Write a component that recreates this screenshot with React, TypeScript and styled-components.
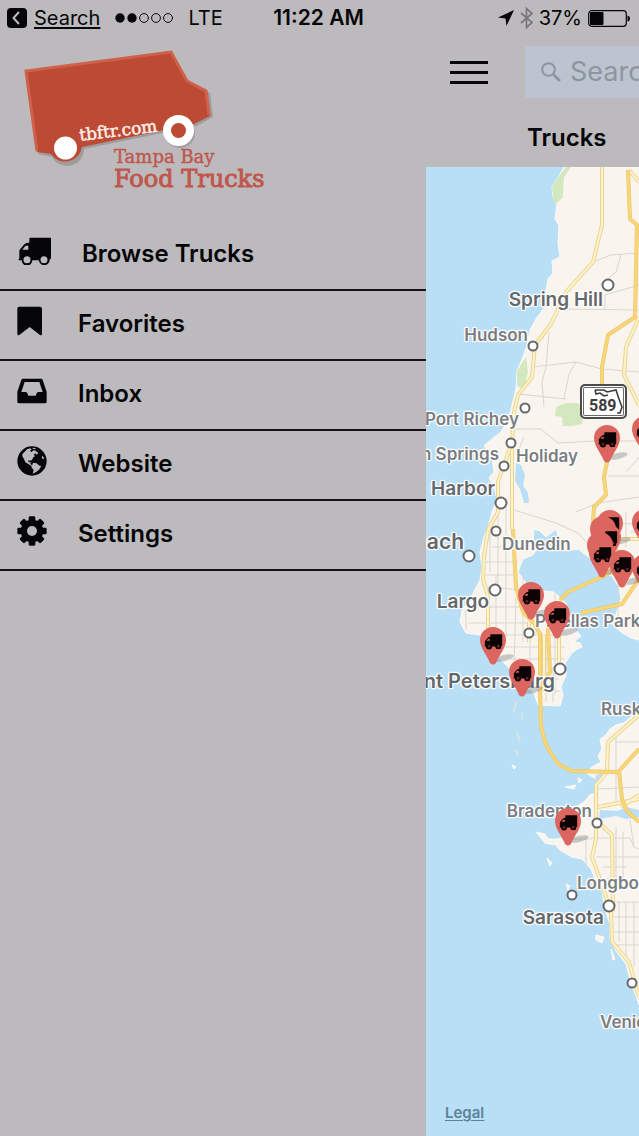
import React from 'react';
import styled, { createGlobalStyle } from 'styled-components';

const ink = '#060608';
const chrome = '#bcbabd';

const GlobalStyle = createGlobalStyle`
  * { box-sizing: border-box; }
  body {
    margin: 0;
    background: ${chrome};
    color: ${ink};
    font-family: Inter, "Liberation Sans", sans-serif;
  }
`;

/* ---------- Shell ---------- */

const Screen = styled.div`
  display: flex;
  flex-direction: column;
  min-height: 100vh;
  overflow: hidden;
`;

const Body = styled.div`
  flex: 1;
  display: grid;
  grid-template-columns: 2fr 1fr;
`;

/* ---------- Status bar ---------- */

const StatusBar = styled.header`
  display: grid;
  grid-template-columns: 1fr auto 1fr;
  align-items: center;
  height: 36px;
  padding: 0 9px 0 7px;
  font-size: 20px;
  line-height: 24px;
`;

const StatusGroup = styled.div<{ $end?: boolean; $gap: number }>`
  display: flex;
  align-items: center;
  justify-content: ${p => (p.$end ? 'flex-end' : 'flex-start')};
  gap: ${p => p.$gap}px;
`;

const BackLink = styled.a`
  display: flex;
  align-items: center;
  gap: 7px;
  color: inherit;
  text-underline-offset: 2px;
`;

const Clock = styled.time`
  font-size: 21px;
  font-weight: 600;
`;

/* ---------- Drawer ---------- */

const Drawer = styled.aside`
  min-width: 0;
`;

const LogoBox = styled.div`
  height: 185px;
  padding: 10px 0 0 18px;
`;

const MenuList = styled.ul`
  list-style: none;
  margin: 0;
  padding: 0;
`;

const MenuItem = styled.li`
  border-bottom: 2px solid #141316;
`;

const MenuLink = styled.a`
  display: flex;
  align-items: center;
  gap: 31px;
  height: 68px;
  padding: 0 17px 8px;
  color: inherit;
  text-decoration: none;
  svg { flex: none; }
`;

const MenuLabel = styled.span`
  padding-top: 5px;
  font-size: 24px;
  line-height: 28px;
  font-weight: 600;
`;

/* ---------- Main pane ---------- */

const Pane = styled.main`
  display: flex;
  flex-direction: column;
  min-width: 0;
  overflow: hidden;
`;

const Toolbar = styled.div`
  display: flex;
  align-items: center;
  gap: 37px;
  height: 68px;
  padding: 4px 0 0 24px;
`;

const MenuButton = styled.button`
  flex: none;
  display: flex;
  flex-direction: column;
  gap: 7px;
  width: 38px;
  padding: 0;
  border: 0;
  background: none;
`;

const Bar = styled.span`
  height: 3px;
  background: ${ink};
`;

const SearchBox = styled.label`
  flex: none;
  display: flex;
  align-items: center;
  gap: 9px;
  width: 480px;
  height: 52px;
  padding: 0 16px;
  border-radius: 3px;
  background: #bcc4d0;
`;

const SearchInput = styled.input`
  flex: 1;
  min-width: 0;
  padding: 0;
  border: 0;
  outline: 0;
  background: none;
  color: ${ink};
  font: 400 27px/32px Inter, "Liberation Sans", sans-serif;
  &::placeholder { color: #8d959f; opacity: 1; }
`;

const PaneTitle = styled.h1`
  margin: 0;
  padding: 20px 0 0 101px;
  height: 63px;
  font-size: 24px;
  line-height: 28px;
  font-weight: 600;
`;

/* ---------- Map ---------- */

const MapCanvas = styled.section`
  position: relative;
  flex: 1;
  min-height: 960px;
  overflow: hidden;
  background: #b9dff6;
`;

const Terrain = styled.svg`
  display: block;
`;

const CityLabel = styled.span<{ $x: number; $y: number; $size: number; $end?: boolean; $major?: boolean }>`
  position: absolute;
  left: ${p => p.$x}px;
  top: ${p => p.$y}px;
  transform: translate(${p => (p.$end ? '-100%' : '0')}, -50%);
  white-space: nowrap;
  font-size: ${p => p.$size}px;
  line-height: 24px;
  font-weight: 600;
  color: ${p => (p.$major ? '#65686b' : '#7b7e81')};
  text-shadow: 0 0 2px #fff, 0 0 2px #fff, 1px 1px 1px #fff, -1px -1px 1px #fff, 1px -1px 1px #fff, -1px 1px 1px #fff;
`;

const PinMark = styled.button<{ $x: number; $y: number }>`
  position: absolute;
  left: ${p => p.$x - 14}px;
  top: ${p => p.$y - 14}px;
  padding: 0;
  border: 0;
  background: none;
  svg { display: block; overflow: visible; }
`;

const Shield = styled.div`
  position: absolute;
  left: 154px;
  top: 217px;
  width: 47px;
  height: 35px;
  border: 2px solid #4b4b4b;
  border-radius: 5px;
  background: #fff;
  box-shadow: inset 0 0 0 1px #fff, inset 0 0 0 2px #6a6a6a;
  svg { position: absolute; left: 0; top: 0; }
`;

const ShieldNumber = styled.span`
  position: absolute;
  left: 7px;
  bottom: 2px;
  font: 700 16px/18px Roboto, "Liberation Sans", sans-serif;
  color: #3c3c3c;
`;

const LegalLink = styled.a`
  position: absolute;
  left: 19px;
  bottom: 13px;
  font-size: 15px;
  line-height: 20px;
  font-weight: 600;
  color: #5d8398;
  text-underline-offset: 2px;
`;

/* ---------- Icons ---------- */

const truckPath =
  'M38 2 H98 Q101 2 101 5 V66 H96 A16 16 0 1 1 64 70 H44 A16 16 0 1 1 12 70 H3 V65 H5 V42 Q5 39 8 36 L20 22 Q24 17 30 17 H35 V5 Q35 2 38 2 Z M14 38 H32 V26 H25 Q23 26 21 29 Z';

const TruckIcon = () => (
  <svg width="34" height="28" viewBox="-2 0 102 84">
    <path fillRule="evenodd" fill={ink} d={truckPath} />
    <circle cx="28" cy="68" r="13" fill={chrome} stroke={ink} strokeWidth="5" />
    <circle cx="79" cy="68" r="13" fill={chrome} stroke={ink} strokeWidth="5" />
  </svg>
);

const BookmarkIcon = () => (
  <svg width="30" height="30" viewBox="0 0 90 90">
    <path fill={ink} d="M6 2 H69 Q75 2 75 8 V83 Q75 90 69 87 L38 63 L7 87 Q1 90 1 83 V8 Q1 2 6 2 Z" />
  </svg>
);

const InboxIcon = () => (
  <svg width="30" height="30" viewBox="0 0 90 90">
    <path
      fillRule="evenodd"
      fill={ink}
      d="M18 8 H72 Q76 8 77 12 L88 44 Q89 47 89 50 V78 Q89 82 85 82 H5 Q1 82 1 78 V50 Q1 47 2 44 L13 12 Q14 8 18 8 Z M23 18 L13 48 H25 Q29 48 31 52 L34 59 H56 L59 52 Q61 48 65 48 H77 L67 18 Z"
    />
  </svg>
);

const GlobeIcon = () => (
  <svg width="30" height="30" viewBox="0 0 90 90">
    <circle cx="45" cy="45" r="44" fill={ink} />
    <path
      fill={chrome}
      d="M30 10 L40 7 L44 11 L38 14 L44 18 L49 13 L56 14 L64 22 L58 26 L55 22 L50 26 L54 30 L48 35 L45 42 L38 44 L33 43 L35 49 L41 48 L40 54 L47 59 L43 60 L34 54 L25 49 L21 39 L16 31 L16 25 Z"
    />
    <path fill={chrome} d="M48 51 L57 51 L68 59 L73 60 L66 71 L56 79 L47 83 L50 72 L43 64 Z" />
    <path fill={chrome} d="M47 5 L57 7 L54 10 L47 8 Z M77 29 L82 38 L77 39 L74 34 Z" />
  </svg>
);

const GearIcon = () => (
  <svg width="30" height="30" viewBox="-45 -45 90 90">
    {[0, 45, 90, 135].map(a => (
      <rect key={a} x="-10" y="-44" width="20" height="88" rx="4" fill={ink} transform={`rotate(${a})`} />
    ))}
    <circle r="34" fill={ink} />
    <circle r="15" fill={chrome} />
  </svg>
);

const BackIcon = () => (
  <svg width="20" height="20" viewBox="0 0 20 20" aria-hidden="true">
    <rect width="20" height="20" rx="4" fill={ink} />
    <path d="M12 4 L6.500 10 L12 16" fill="none" stroke={chrome} strokeWidth="2" />
  </svg>
);

const SignalIcon = () => (
  <svg width="58" height="12" viewBox="0 0 58 12" role="img" aria-label="Signal 2 of 5">
    {[0, 1, 2, 3, 4].map(i => (
      <circle key={i} cx={5 + i * 12} cy="6" r={i < 2 ? 4.7 : 4.4} fill={i < 2 ? ink : 'none'} stroke={ink} strokeWidth={i < 2 ? 0 : 1} />
    ))}
  </svg>
);

const LocationIcon = () => (
  <svg width="16" height="16" viewBox="0 0 16 16" aria-hidden="true">
    <path d="M16 0 L8.500 16 L7.500 8.500 L0 7.500 Z" fill={ink} />
  </svg>
);

const BluetoothIcon = () => (
  <svg width="13" height="22" viewBox="0 0 13 22" aria-hidden="true">
    <path d="M1 6 L12 15.500 L6.500 20.500 V1.500 L12 6.500 L1 16" fill="none" stroke="#78777b" strokeWidth="1.700" />
  </svg>
);

const BatteryIcon = () => (
  <svg width="42" height="17" viewBox="0 0 42 17" role="img" aria-label="Battery">
    <rect x="0.700" y="0.700" width="37.600" height="15.600" rx="3" fill="none" stroke={ink} strokeWidth="1.200" />
    <rect x="2" y="2" width="13.500" height="13" rx="1" fill={ink} />
    <path d="M39.500 5.500 Q42 6 42 8.500 Q42 11 39.500 11.500 Z" fill={ink} />
  </svg>
);

const MagnifierIcon = () => (
  <svg width="20" height="20" viewBox="0 0 20 20" aria-hidden="true">
    <circle cx="7.500" cy="7.500" r="6.300" fill="none" stroke="#8d959f" strokeWidth="2" />
    <path d="M12 12 L19 19" stroke="#8d959f" strokeWidth="2.600" />
  </svg>
);

const slab = '"DejaVu Serif", serif';

const Logo = () => (
  <svg width="256" height="150" viewBox="18 46 256 150" role="img" aria-label="Tampa Bay Food Trucks">
    <path d="M27 73 L173 53 L189 83 L210 93 L213 117 L197 126 L84 149 A17 17 0 0 1 52 157 L38 154 Z" fill="#8d8889" opacity="0.6" />
    <path d="M25 71 L171 51 L187 81 L207 91 L210 116 L194 124 L82 147 A17 17 0 0 1 51 154 L37 152 Z" fill="#bd4a35" />
    <path d="M37 151 L26 71 L171 52 L187 81 L206 91 L209 115" fill="none" stroke="#cf6049" strokeWidth="3" />
    <circle cx="180" cy="133" r="15" fill="#8d8889" opacity="0.6" />
    <circle cx="65.500" cy="148" r="11.500" fill="#fff" />
    <circle cx="178.500" cy="130.500" r="15.500" fill="#fff" />
    <circle cx="178.500" cy="130.500" r="7.500" fill="#bd4a35" />
    <text x="80" y="141" transform="rotate(-7 80 141)" fontFamily={slab} fontSize="17" fill="#fbeee6" stroke="#fbeee6" strokeWidth="0.500">tbftr.com</text>
    <text x="114" y="163" fontFamily={slab} fontSize="18" fill="#c0564c" stroke="#c0564c" strokeWidth="0.400">Tampa Bay</text>
    <text x="114" y="187" fontFamily={slab} fontSize="24" fill="#c0564c" stroke="#c0564c" strokeWidth="0.900">Food Trucks</text>
  </svg>
);

/* ---------- Map data ---------- */

const northLand =
  'M138 0 L133 9 L126 20 L127 30 L131 37 L129 52 L133 58 L132 76 L134 90 L126 94 L127 106 L122 112 L120 125 L118 141 L110 152 L104 163 L101 178 L97 190 L91 204 L90 222 L86 238 L82 254 L74 266 L62 275 L58 279 L66 290 L68 305 L63 311 L68 320 L71 332 L66 345 L63 357 L58 370 L54 385 L56 400 L54 413 L45 430 L36 443 L34 455 L40 466 L54 468 L62 480 L76 494 L88 506 L98 516 L108 526 L112 538 L134 539 L137 528 L135 520 L140 508 L139 496 L146 486 L154 480 L149 474 L155 469 L147 460 L143 444 L140 436 L128 425 L114 424 L100 416 L92 405 L97 392 L107 388 L110 383 L107 374 L108 362 L114 364 L120 370 L130 362 L133 372 L128 380 L140 384 L152 382 L165 392 L172 404 L186 409 L193 420 L195 432 L190 447 L186 457 L195 465 L205 471 L213 473 H600 V0 Z';
const southLand =
  'M600 542 H213 L206 549 L198 556 L190 558 L184 562 L179 569 L174 572 L176 582 L172 589 L175 595 L166 600 L160 606 L170 612 L172 625 L164 628 L158 635 L148 641 L153 650 L140 655 L143 664 L136 671 L126 674 L134 683 L146 690 L156 692 L165 702 L170 714 L176 724 L179 742 L184 758 L184 772 L190 784 L200 797 L204 812 L213 838 H600 Z';
const islets =
  'M110 665 L119 667 L122 672 L134 672 L128 678 L119 676 Z M121 691 L126 696 L124 699 Z M139 620 L150 618 L148 622 Z M86 598 L90 600 L88 602 Z M140 717 L144 719 L142 723 Z M170 768 L178 770 L176 776 L170 773 Z M185 782 L189 792 L187 793 Z M152 611 L156 613 L153 616 Z M145 474 L154 476 L156 480 L149 483 Z';
const lakes =
  'M90 296 L95 298 L99 308 L97 318 L102 326 L103 336 L98 336 L94 322 L89 314 Z M174 643 L192 644 L200 640 L213 643 V650 L200 652 L190 649 L173 652 Z M170 608 L178 606 L175 613 L169 616 Z';
const parks =
  'M133 9 L140 0 H145 L138 10 L137 30 L129 38 L127 30 L126 20 Z M100 190 L102 205 L98 222 L91 219 L91 204 Z M130 240 L140 236 L152 236 L158 244 L156 257 L146 259 H137 L136 250 L129 249 Z';

const greyRoads = [
  'M167 95 L185 88 L213 86', 'M195 88 L190 105 L176 117', 'M135 142 L213 143', 'M179 128 V142', 'M179 128 L213 118',
  'M106 200 L150 195 L176 202 L213 205', 'M150 195 L143 207 L138 232', 'M123 165 L120 200 L116 215 L118 240', 'M92 227 L140 232',
  'M86 262 L115 262 L132 276 L170 274 L213 274', 'M182 309 L213 309', 'M213 290 L200 305', 'M88 343 L130 356 L152 366 L165 380', 'M150 345 L172 336 L213 330',
  'M60 395 H90', 'M58 408 H92', 'M66 380 H90', 'M64 363 V405', 'M72 345 V420', 'M80 340 V470', 'M98 270 L92 285', 'M70 408 V485', 'M62 420 L108 424', 'M50 440 H110', 'M42 456 H115', 'M55 468 H136', 'M75 480 H139', 'M84 492 H138', 'M97 404 V475', 'M104 455 V512', 'M90 430 L88 500', 'M129 425 V528', 'M120 470 V535', 'M127 500 V536', 'M40 443 V463', 'M100 512 H132', 'M112 524 H134',
  'M200 345 V380', 'M205 365 H213', 'M167 356 L213 357', 'M164 370 L213 372', 'M180 345 L180 375', 'M192 410 V450',
  'M190 570 V638', 'M213 620 L172 622', 'M189 575 H213', 'M165 671 H204 L208 680', 'M204 653 L208 680 L213 682', 'M160 670 V700', 'M190 660 V712', 'M197 665 V712', 'M170 690 H213', 'M178 712 H198', 'M177 700 H200', 'M186 735 H213', 'M188 750 H213', 'M188 765 H213', 'M190 778 H213', 'M200 735 V790', 'M208 735 V800', 'M193 735 V775', 'M136 672 H165',
];

const paleRoads = [
  'M176 0 V58 L167 95 L140 125 L125 157 L109 178 L106 210 L92 228 L88 245 L86 275 V362',
  'M86 275 L78 298 L72 315 L72 345 L62 363 L58 390 L57 412 L62 430 V472',
  'M213 150 L200 180 L198 208 L213 238', 'M203 3 L213 15', 'M133 462 V495', 'M118 467 V520', 'M103 455 V475',
  'M213 548 L182 575 L181 605 L170 618 V672 L166 690 L176 718 L185 745 L186 775 L203 795 L213 830',
  'M172 640 L213 632', 'M172 655 L186 668 L187 745', 'M164 372 H213', 'M195 640 L213 628',
];

const goldRoads = [
  'M202 3 L204 52 L211 58 L209 150 L182 168 L176 200 V240', 'M182 290 L178 310 L180 328 L168 340 L167 356',
  'M87 362 L90 420 L97 445', 'M97 445 L108 456 L114 467 V520 L115 560 L120 578 L132 597 L146 604 L192 605',
  'M134 433 L142 425 L180 408 L200 392', 'M155 446 L196 437 L213 412', 'M121 440 L124 505 L115 522',
  'M213 582 L193 604 L196 632 L201 644 L213 655', 'M167 356 L175 375 L196 387',
];

const towns: [number, number, number][] = [
  [182, 118, 5.5], [107, 179, 4.5], [99, 241, 4.5], [85, 276, 4.5], [78, 299, 4.5], [75, 336, 5.5], [70, 364, 4.5], [43, 389, 5.5],
  [69, 423, 5.5], [103, 466, 4.5], [134, 502, 5.5], [171, 656, 4.5], [146, 728, 4.5], [183, 739, 5.5], [206, 816, 4.5],
];

type City = { name: string; x: number; y: number; size: number; end?: boolean; major?: boolean };
const cities: City[] = [
  { name: 'Spring Hill', x: 177, y: 133, size: 19, end: true, major: true },
  { name: 'Hudson', x: 102, y: 168, size: 17, end: true },
  { name: 'Port Richey', x: 93, y: 252, size: 17, end: true },
  { name: 'Tarpon Springs', x: 73, y: 287, size: 17, end: true },
  { name: 'Holiday', x: 90, y: 289, size: 17 },
  { name: 'Harbor', x: 69, y: 322, size: 19, end: true, major: true },
  { name: 'Beach', x: 38, y: 375, size: 21, end: true, major: true },
  { name: 'Dunedin', x: 76, y: 377, size: 17 },
  { name: 'Largo', x: 63, y: 435, size: 19, end: true, major: true },
  { name: 'Pinellas Park', x: 109, y: 454, size: 17 },
  { name: 'Saint Petersburg', x: 129, y: 514, size: 20, end: true, major: true },
  { name: 'Ruskin', x: 175, y: 542, size: 17 },
  { name: 'Bradenton', x: 166, y: 644, size: 17, end: true },
  { name: 'Longboat Key', x: 151, y: 716, size: 17 },
  { name: 'Sarasota', x: 178, y: 751, size: 19, end: true, major: true },
  { name: 'Venice', x: 174, y: 855, size: 17 },
];

type PinSpot = { x: number; y: number; bare?: boolean };
const pins: PinSpot[] = [
  { x: 181, y: 271 },
  { x: 219, y: 262 },
  { x: 219, y: 355 },
  { x: 219, y: 400 },
  { x: 184, y: 356 },
  { x: 177, y: 362, bare: true },
  { x: 182, y: 370 },
  { x: 174, y: 378, bare: true },
  { x: 176, y: 386 },
  { x: 196, y: 396 },
  { x: 105, y: 428 },
  { x: 131, y: 447 },
  { x: 67, y: 473 },
  { x: 96, y: 505 },
  { x: 142, y: 654 },
];

const Pin = ({ x, y, bare }: PinSpot) => (
  <PinMark $x={x} $y={y} type="button" aria-label="Food truck">
    <svg width="28" height="40" viewBox="0 0 28 40">
      {!bare && <ellipse cx="25" cy="32" rx="10" ry="3" fill="#6b7378" opacity="0.35" transform="rotate(-14 25 32)" />}
      <path d="M14 1 A13 13 0 0 1 27 14 C27 22 20 29 17 37 Q14 40 11 37 C8 29 1 22 1 14 A13 13 0 0 1 14 1 Z" fill="#dd6560" />
      {!bare && (
        <g transform="translate(5 8) scale(0.18)">
          <path d={truckPath} fill="#0b0304" fillRule="evenodd" />
          <circle cx="28" cy="68" r="12" fill="#5a2325" stroke="#0b0304" strokeWidth="8" />
          <circle cx="79" cy="68" r="12" fill="#5a2325" stroke="#0b0304" strokeWidth="8" />
        </g>
      )}
    </svg>
  </PinMark>
);

const Roads = ({ paths, color, width }: { paths: string[]; color: string; width: number }) => (
  <g fill="none" stroke={color} strokeWidth={width} strokeLinejoin="round">
    {paths.map(d => <path key={d} d={d} />)}
  </g>
);

const TruckMap = () => (
  <MapCanvas aria-label="Map of food trucks">
    <Terrain width="600" height="960" viewBox="0 0 600 960" aria-hidden="true">
      <g fill="#f9f5ee" stroke="#fdfbf6" strokeWidth="1">
        <path d={northLand} />
        <path d={southLand} />
        <path d={islets} />
      </g>
      <path d={parks} fill="#d3e8bf" />
      <path d={lakes} fill="#b9dff6" />
      <Roads paths={greyRoads} color="#d9d5cf" width={1} />
      <Roads paths={paleRoads} color="#ecd48c" width={4} />
      <Roads paths={paleRoads} color="#fdf4cf" width={2} />
      <Roads paths={goldRoads} color="#e8c468" width={4} />
      <Roads paths={goldRoads} color="#f8d678" width={3} />
      <path d="M90 535 L88 545 M96 545 V552 M91 565 L94 575 M89 583 L92 588" stroke="#d9e4e0" strokeWidth="2" />
      <g fill="#fff" stroke="#66686a" strokeWidth="2">
        {towns.map(([cx, cy, r]) => <circle key={`${cx}-${cy}`} cx={cx} cy={cy} r={r} />)}
      </g>
    </Terrain>
    {cities.map(c => (
      <CityLabel key={c.name} $x={c.x} $y={c.y} $size={c.size} $end={c.end} $major={c.major}>{c.name}</CityLabel>
    ))}
    <Shield>
      <svg width="43" height="31" viewBox="0 0 43 31" aria-hidden="true">
        <path d="M13 4 H22 L25 6 L34 4 L37 13 L40 21 L38 27 L35 27 M13 4 L14 8 L18 7 L22 10 L26 9" fill="none" stroke="#3c3c3c" strokeWidth="1.600" />
      </svg>
      <ShieldNumber>589</ShieldNumber>
    </Shield>
    {pins.map(p => <Pin key={`${p.x}-${p.y}`} {...p} />)}
    <LegalLink href="#legal">Legal</LegalLink>
  </MapCanvas>
);

/* ---------- App ---------- */

const menu = [
  { label: 'Browse Trucks', Icon: TruckIcon },
  { label: 'Favorites', Icon: BookmarkIcon },
  { label: 'Inbox', Icon: InboxIcon },
  { label: 'Website', Icon: GlobeIcon },
  { label: 'Settings', Icon: GearIcon },
];

export default function App() {
  return (
    <Screen>
      <GlobalStyle />
      <StatusBar>
        <StatusGroup $gap={15}>
          <BackLink href="#search"><BackIcon />Search</BackLink>
          <SignalIcon />
          <span>LTE</span>
        </StatusGroup>
        <Clock>11:22 AM</Clock>
        <StatusGroup $end $gap={6}>
          <LocationIcon />
          <BluetoothIcon />
          <span>37%</span>
          <BatteryIcon />
        </StatusGroup>
      </StatusBar>
      <Body>
        <Drawer>
          <LogoBox><Logo /></LogoBox>
          <nav>
            <MenuList>
              {menu.map(({ label, Icon }) => (
                <MenuItem key={label}>
                  <MenuLink href={`#${label.toLowerCase().replace(' ', '-')}`}>
                    <Icon />
                    <MenuLabel>{label}</MenuLabel>
                  </MenuLink>
                </MenuItem>
              ))}
            </MenuList>
          </nav>
        </Drawer>
        <Pane>
          <Toolbar>
            <MenuButton type="button" aria-label="Toggle menu"><Bar /><Bar /><Bar /></MenuButton>
            <SearchBox>
              <MagnifierIcon />
              <SearchInput type="search" placeholder="Search" aria-label="Search" />
            </SearchBox>
          </Toolbar>
          <PaneTitle>Trucks</PaneTitle>
          <TruckMap />
        </Pane>
      </Body>
    </Screen>
  );
}
